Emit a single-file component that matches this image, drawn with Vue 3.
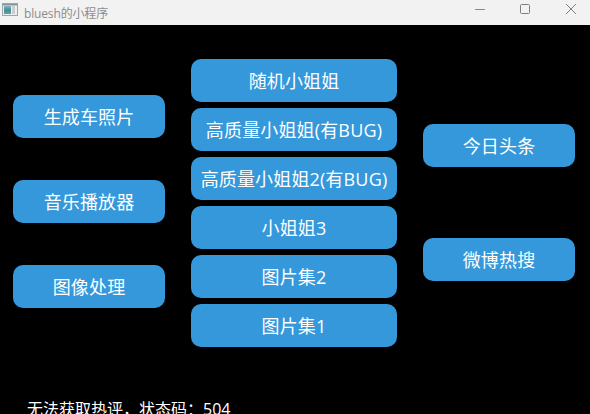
<script setup>
const left = ['生成车照片', '音乐播放器', '图像处理']
const middle = ['随机小姐姐', '高质量小姐姐(有BUG)', '高质量小姐姐2(有BUG)', '小姐姐3', '图片集2', '图片集1']
const right = ['今日头条', '微博热搜']
</script>

<template>
  <div class="window">
    <header class="titlebar">
      <svg class="app-icon" width="16" height="13" viewBox="0 0 16 13">
        <defs>
          <linearGradient id="pane" x1="0" y1="0" x2="0" y2="1">
            <stop offset="0" stop-color="#8fb0bf" />
            <stop offset="0.5" stop-color="#3f8f8f" />
            <stop offset="1" stop-color="#5f9fb5" />
          </linearGradient>
        </defs>
        <rect x="0.5" y="0.5" width="15" height="12" fill="#eef0f0" stroke="#9aa5a8" />
        <rect x="1" y="1" width="14" height="1.5" fill="#7f98a2" />
        <rect x="2" y="3" width="7" height="8" fill="url(#pane)" />
        <rect x="10" y="3" width="3" height="8" fill="#c9ced0" />
      </svg>
      <span class="title">bluesh的小程序</span>
      <div class="controls">
        <svg width="46" height="25" viewBox="0 0 46 25"><path d="M23 9.5h10" stroke="#8a8a8a" fill="none" /></svg>
        <svg width="46" height="25" viewBox="0 0 46 25"><rect x="22.5" y="4.5" width="9" height="9" rx="1" stroke="#808080" fill="none" /></svg>
        <svg width="46" height="25" viewBox="0 0 46 25"><path d="M22 4l10 10M32 4L22 14" stroke="#808080" fill="none" /></svg>
      </div>
    </header>
    <main class="content">
      <div class="columns">
        <div class="col col-left">
          <button v-for="t in left" :key="t" class="btn">{{ t }}</button>
        </div>
        <div class="col col-middle">
          <button v-for="t in middle" :key="t" class="btn">{{ t }}</button>
        </div>
        <div class="col col-right">
          <button v-for="t in right" :key="t" class="btn">{{ t }}</button>
        </div>
      </div>
      <p class="status">无法获取热评，状态码：504</p>
    </main>
  </div>
</template>

<style scoped>
.window {
  width: 590px;
  height: 414px;
  overflow: hidden;
  display: flex;
  flex-direction: column;
  background: #000;
  font-family: "Open Sans", "Noto Sans CJK SC", sans-serif;
}
.titlebar {
  height: 25px;
  flex: none;
  background: #f2f2f2;
  display: flex;
  align-items: center;
  padding-left: 2px;
}
.app-icon {
  flex: none;
  align-self: flex-start;
  margin-top: 3px;
}
.title {
  margin-left: 6px;
  font-size: 12px;
  color: #8c8c8c;
  letter-spacing: -0.15px;
}
.controls {
  margin-left: auto;
  display: flex;
}
.controls svg { display: block; }
.content {
  flex: 1;
  display: flex;
  flex-direction: column;
  min-height: 0;
}
.columns {
  display: flex;
  padding: 34px 15px 0 13px;
  justify-content: space-between;
}
.col {
  display: flex;
  flex-direction: column;
}
.col-left { width: 152px; gap: 42px; padding-top: 36px; }
.col-middle { width: 206px; gap: 6px; }
.col-right { width: 152px; gap: 71px; padding-top: 65px; }
.btn {
  height: 43px;
  border: 0;
  border-radius: 10px;
  background: #3498db;
  color: #fff;
  font-family: inherit;
  font-size: 18px;
  letter-spacing: 0.15px;
  padding: 0 0 2px;
  white-space: nowrap;
}
.status {
  margin: 49px 0 0 27px;
  color: #fff;
  font-size: 16px;
  white-space: nowrap;
}
</style>
